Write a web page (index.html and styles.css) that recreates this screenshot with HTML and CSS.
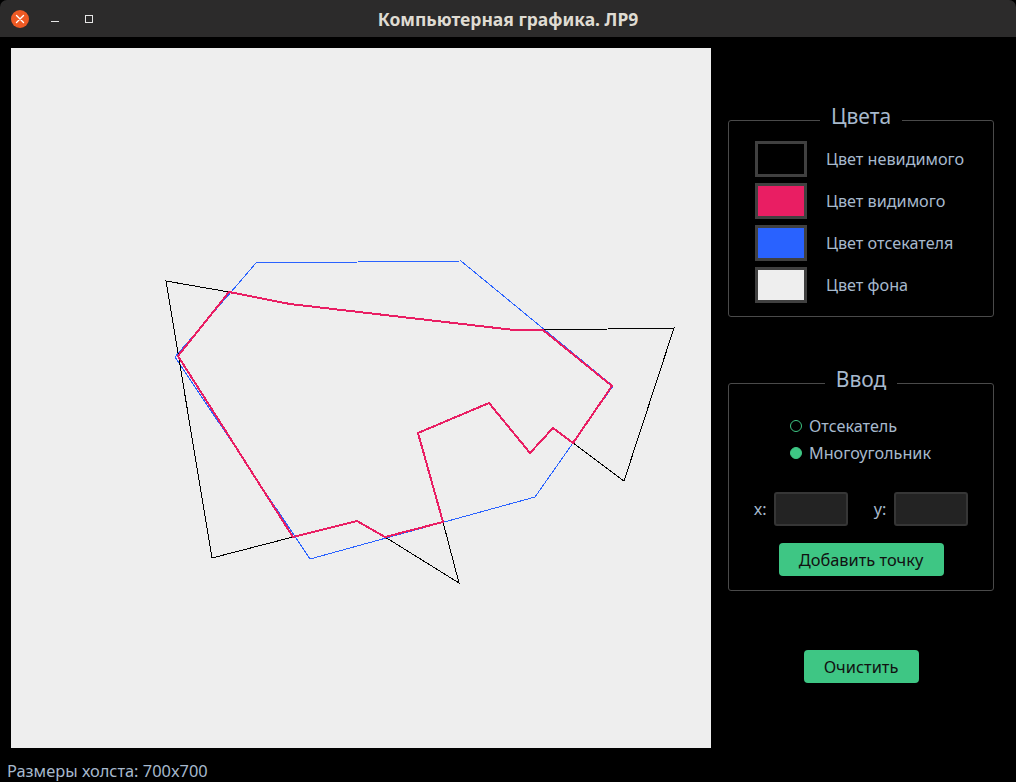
FILE: index.html
```html
<!DOCTYPE html>
<html lang="ru">
<head>
<meta charset="utf-8">
<title>Компьютерная графика. ЛР9</title>
<link rel="stylesheet" href="styles.css">
</head>
<body>
<div class="window">
  <header class="titlebar">
    <div class="controls">
      <span class="wbtn close">
        <svg width="18" height="18" viewBox="0 0 18 18"><path d="M5.5 5.5 L12.5 12.5 M12.5 5.5 L5.5 12.5" stroke="#fff" stroke-width="1.4" stroke-linecap="round"/></svg>
      </span>
      <span class="wbtn minimize"><span class="min-bar"></span></span>
      <span class="wbtn maximize"><span class="max-box"></span></span>
    </div>
    <div class="title">Компьютерная графика. ЛР9</div>
    <div class="spacer"></div>
  </header>

  <main class="content">
    <div class="canvas">
      <svg width="700" height="700" viewBox="11 48 700 700" shape-rendering="crispEdges">
        <polygon points="256,263 461,261 613,386 535,497 310,559 175,357" fill="none" stroke="#2962ff" stroke-width="1"/>
        <g fill="none" stroke="#000" stroke-width="1">
          <polyline points="229,292 166,281 212,558 293,537"/>
          <polyline points="543,330 674,328 624,481 573,443"/>
          <polyline points="443,522 459,583 385,537"/>
        </g>
        <polygon points="229,292 290,304 514,330 543,330 612,386 573,443 553,428 530,453 489,403 418,433 443,522 385,537 357,521 293,537 178,356" fill="none" stroke="#e91e63" stroke-width="2" stroke-linejoin="miter"/>
      </svg>
    </div>

    <aside class="sidebar">
      <fieldset class="group colors">
        <legend>Цвета</legend>
        <div class="color-list">
          <div class="color-row"><span class="swatch sw-invisible"></span><span class="label">Цвет невидимого</span></div>
          <div class="color-row"><span class="swatch sw-visible"></span><span class="label">Цвет видимого</span></div>
          <div class="color-row"><span class="swatch sw-clipper"></span><span class="label">Цвет отсекателя</span></div>
          <div class="color-row"><span class="swatch sw-bg"></span><span class="label">Цвет фона</span></div>
        </div>
      </fieldset>

      <fieldset class="group input">
        <legend>Ввод</legend>
        <div class="input-body">
          <div class="radios">
            <label class="radio"><span class="dot"></span><span class="label">Отсекатель</span></label>
            <label class="radio"><span class="dot checked"></span><span class="label">Многоугольник</span></label>
          </div>
          <div class="coords">
            <span class="label coord-label">x:</span><span class="field"></span>
            <span class="label coord-label y">y:</span><span class="field"></span>
          </div>
          <button class="btn add">Добавить точку</button>
        </div>
      </fieldset>

      <button class="btn clear">Очистить</button>
    </aside>
  </main>

  <footer class="status">Размеры холста: 700x700</footer>
</div>
</body>
</html>
```

FILE: styles.css
```css
html, body {
  margin: 0;
  padding: 0;
}

body {
  background: #000;
  width: 1016px;
  height: 782px;
  overflow: hidden;
  font-family: "Noto Sans", "DejaVu Sans", sans-serif;
}

.window {
  display: flex;
  flex-direction: column;
  height: 782px;
}

.titlebar {
  height: 37px;
  flex: none;
  background: #2c2b2b;
  border-radius: 7px 7px 0 0;
  display: grid;
  grid-template-columns: 1fr auto 1fr;
  align-items: center;
}

.controls {
  display: flex;
  align-items: center;
  padding-left: 11px;
}

.wbtn {
  display: flex;
  align-items: center;
  justify-content: center;
}

.close {
  width: 18px;
  height: 18px;
  border-radius: 50%;
  background: #ee5a24;
}

.minimize {
  width: 10px;
  height: 18px;
  margin-left: 21px;
}

.min-bar {
  width: 8px;
  height: 1px;
  background: #e6e6e6;
  margin-top: 5px;
}

.maximize {
  width: 10px;
  height: 18px;
  margin-left: 24px;
}

.max-box {
  width: 6px;
  height: 6px;
  border: 1px solid #e6e6e6;
}

.title {
  color: #dfdbd2;
  font-family: "Noto Sans", "DejaVu Sans", sans-serif;
  font-weight: 700;
  font-size: 17.5px;
  line-height: 24px;
}

.content {
  display: flex;
  padding: 11px 0 0 11px;
  height: 711px;
  flex: none;
  box-sizing: border-box;
}

.canvas {
  width: 700px;
  height: 700px;
  background: #eeeeee;
  flex: none;
}

.canvas svg {
  display: block;
}

.sidebar {
  width: 266px;
  margin-left: 17px;
  padding-top: 56px;
  display: flex;
  flex-direction: column;
  align-items: center;
}

.label {
  color: #a7b9cd;
  font-size: 16.2px;
}

.group {
  width: 266px;
  box-sizing: border-box;
  margin: 0;
  border: 1px solid #4a4a4a;
  border-radius: 3px;
  padding: 0;
}

.group legend {
  margin: 0 auto;
  padding: 0 11px 8px;
  color: #a7b9cd;
  font-size: 21px;
  line-height: 24px;
}

.color-list {
  display: flex;
  flex-direction: column;
  gap: 6px;
  padding: 5px 0 13px 26px;
}

.color-row {
  display: flex;
  align-items: center;
  gap: 19px;
}

.swatch {
  width: 52px;
  height: 36px;
  box-sizing: border-box;
  border: 3px solid #404040;
  flex: none;
}

.sw-invisible { background: #000; }
.sw-visible { background: #e91e63; }
.sw-clipper { background: #2962ff; }
.sw-bg { background: #eeeeee; }

.group.input {
  margin-top: 50px;
}

.input-body {
  display: flex;
  flex-direction: column;
  align-items: center;
  padding: 17px 0 14px;
}

.radios {
  display: flex;
  flex-direction: column;
  gap: 7px;
  align-self: center;
  width: 142px;
}

.radio {
  display: flex;
  align-items: center;
  gap: 7px;
  height: 20px;
}

.dot {
  width: 12px;
  height: 12px;
  box-sizing: border-box;
  border-radius: 50%;
  border: 1.5px solid #3ec684;
  flex: none;
}

.dot.checked {
  background: #3ec684;
}

.coords {
  display: flex;
  align-items: center;
  margin-top: 29px;
}

.coord-label {
  margin-right: 7px;
}

.coord-label.y {
  margin-left: 26px;
  margin-right: 8px;
}

.field {
  width: 74px;
  height: 34px;
  box-sizing: border-box;
  background: #232323;
  border: 2px solid #363636;
  border-radius: 3px;
}

.btn {
  border: none;
  background: #3ec684;
  color: #111;
  font-family: "Noto Sans", "DejaVu Sans", sans-serif;
  font-size: 16.4px;
  border-radius: 4px;
  padding: 0;
  height: 33px;
}

.btn.add {
  width: 165px;
  margin-top: 17px;
}

.btn.clear {
  width: 115px;
  margin-top: 59px;
}

.status {
  padding: 13px 0 0 7px;
  color: #a7b9cd;
  font-size: 16.4px;
  line-height: 20px;
}
```
